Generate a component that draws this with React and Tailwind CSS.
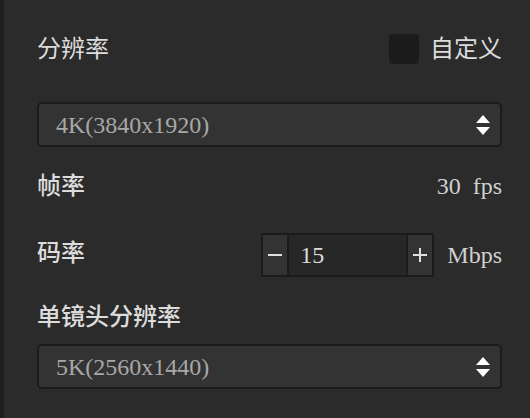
import React, { useState } from 'react';

const FONT = { fontFamily: '"Liberation Serif", "Noto Sans CJK SC", serif' };

function Arrows() {
    return (
        <svg width="14" height="20" viewBox="0 0 14 20" className="shrink-0">
            <polygon points="7,0 14,8 0,8" fill="#ffffff" />
            <polygon points="0,12 14,12 7,20" fill="#ffffff" />
        </svg>
    );
}

function SelectBox({ value }) {
    return (
        <div className="h-[45px] flex items-center justify-between rounded-[5px] border-2 border-[#1b1b1b] bg-[#333333] pl-[17px] pr-[10px]">
            <span className="text-[24px] leading-none text-[#a8a8a8]">{value}</span>
            <Arrows />
        </div>
    );
}

export default function App() {
    const [bitrate, setBitrate] = useState(15);

    return (
        <div className="flex w-[530px] h-[418px] bg-[#2b2b2b] overflow-hidden" style={FONT}>
            <div className="w-[4px] shrink-0 bg-[#1e1e1e]" />

            <div className="flex-1 flex flex-col pl-[33px] pr-[28px] pt-[34px]">
                {/* resolution + custom */}
                <div className="h-[30px] flex items-center justify-between">
                    <span className="text-[24px] leading-none text-[#dcdcdc]">分辨率</span>
                    <div className="flex items-center gap-[11px]">
                        <div className="w-[30px] h-[30px] rounded-[4px] bg-[#1c1c1c]" />
                        <span className="text-[24px] leading-none text-[#dcdcdc]">自定义</span>
                    </div>
                </div>

                <div className="mt-[38px]">
                    <SelectBox value="4K(3840x1920)" />
                </div>

                {/* frame rate */}
                <div className="mt-[27px] h-[24px] flex items-center justify-between">
                    <span className="text-[24px] leading-none font-medium text-[#dcdcdc]">帧率</span>
                    <span className="text-[24px] leading-none text-[#d0d0d0]">30&nbsp;&nbsp;fps</span>
                </div>

                {/* bitrate */}
                <div className="mt-[35px] h-[44px] flex items-center justify-between">
                    <span className="text-[24px] leading-none font-medium text-[#dcdcdc] -mt-[5px]">码率</span>
                    <div className="flex items-center gap-[13px]">
                        <div className="flex h-[44px] border-2 border-[#1b1b1b] bg-[#1b1b1b] gap-[2px]">
                            <button
                                className="w-[24px] bg-[#333333] flex items-center justify-center"
                                onClick={() => setBitrate(bitrate - 1)}
                            >
                                <span className="block w-[14px] h-[2px] bg-[#e0e0e0]" />
                            </button>
                            <div className="w-[117px] bg-[#272727] flex items-center pl-[11px]">
                                <span className="text-[24px] leading-none text-[#dcdcdc]">{bitrate}</span>
                            </div>
                            <button
                                className="w-[24px] bg-[#333333] flex items-center justify-center"
                                onClick={() => setBitrate(bitrate + 1)}
                            >
                                <svg width="14" height="14" viewBox="0 0 14 14">
                                    <rect x="0" y="6" width="14" height="2" fill="#e0e0e0" />
                                    <rect x="6" y="0" width="2" height="14" fill="#e0e0e0" />
                                </svg>
                            </button>
                        </div>
                        <span className="text-[24px] leading-none text-[#d0d0d0]">Mbps</span>
                    </div>
                </div>

                {/* single lens resolution */}
                <div className="mt-[28px] h-[24px] flex items-center">
                    <span className="text-[24px] leading-none font-medium text-[#dcdcdc]">单镜头分辨率</span>
                </div>

                <div className="mt-[15px]">
                    <SelectBox value="5K(2560x1440)" />
                </div>
            </div>
        </div>
    );
}
